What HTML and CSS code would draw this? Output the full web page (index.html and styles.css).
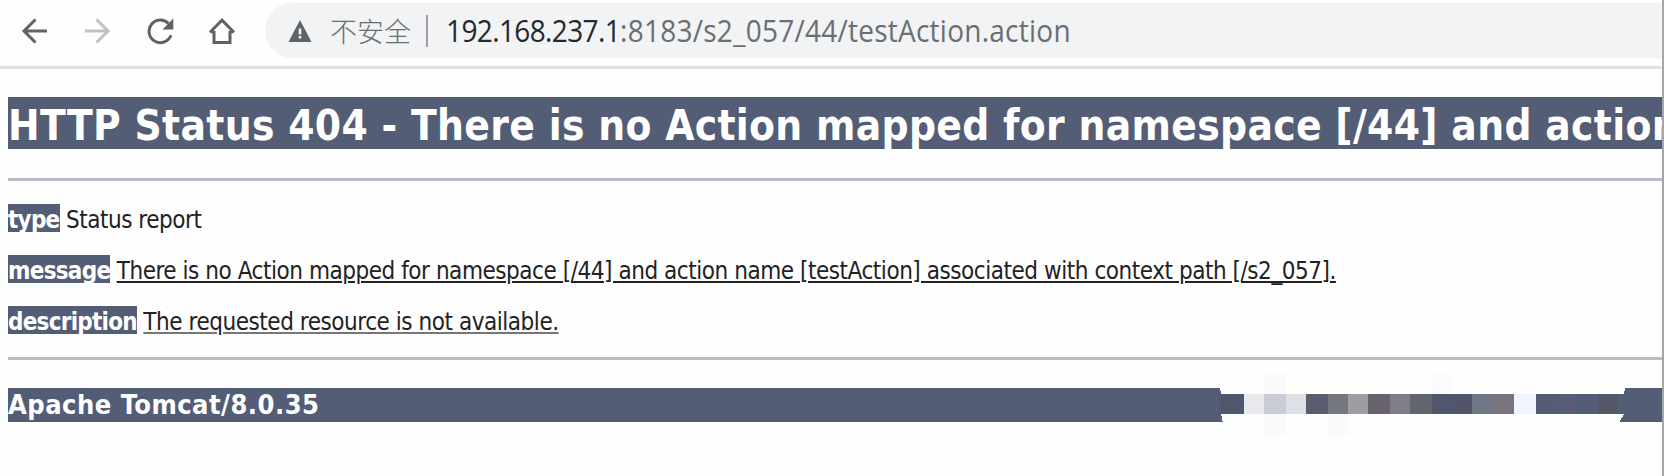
FILE: index.html
```html
<!DOCTYPE html>
<html lang="zh-CN">
<head>
<meta charset="utf-8">
<title>Apache Tomcat/8.0.35 - Error report</title>
<link rel="stylesheet" href="styles.css">
</head>
<body>
<div class="window">
  <header class="toolbar">
    <nav class="nav">
      <svg class="icon" viewBox="0 0 28 28"><path d="M26 14H3M14.500 2.500L3 14l11.500 11.500"/></svg>
      <svg class="icon disabled" viewBox="0 0 28 28"><path d="M2 14h23M13.500 2.500L25 14 13.500 25.500"/></svg>
      <svg class="icon" viewBox="0 0 28 28"><path d="M25 18.200A11.300 11.300 0 1 1 22.500 6.500"/><path class="solid" d="M27.300 1.500v11H16.500z"/></svg>
      <svg class="icon" viewBox="0 0 28 28"><path d="M2 15.200L14 3.200l12 12M2.300 14.800h4M21.700 14.800h4M6 14v11.500h16V14"/></svg>
    </nav>
    <div class="address">
      <svg class="warning" viewBox="0 0 24 22"><path d="M12 0l11.500 22H.500z"/><path class="mark" d="M10.700 8.500h2.600v6h-2.600zM10.700 16h2.600v2.600h-2.600z"/></svg>
      <span class="insecure">不安全</span>
      <span class="divider"></span>
      <span class="url"><span class="host">192.168.237.1</span><span class="path">:8183/s2_057/44/testAction.action</span></span>
    </div>
  </header>
  <main class="report">
    <h1>HTTP Status 404 - There is no Action mapped for namespace [/44] and action</h1>
    <hr>
    <p><b>type</b> <span>Status report</span></p>
    <p><b>message</b> <u>There is no Action mapped for namespace [/44] and action name [testAction] associated with context path [/s2_057].</u></p>
    <p><b>description</b> <u class="thin">The requested resource is not available.</u></p>
    <hr>
    <h3>Apache Tomcat/8.0.35</h3>
    <svg class="mosaic" viewBox="1218 372 410 66" shape-rendering="crispEdges">
      <path fill="#fefefe" d="M1220 378h405v10l-1 6v20l-5 9h-396l-2-9v-20l-1-6z"/>
      <path fill="#fafafc" d="M1264 374h22v20h-22zM1264 414h22v21h-22z"/>
      <path fill="#fefefa" d="M1286 375h82v19h-82zM1576 375h40v19h-40z"/>
      <path fill="#fdfaff" d="M1432 374h20v20h-20z"/>
      <path fill="#fafafb" d="M1328 414h20v21h-20z"/>
      <path fill="#fbfdff" d="M1224 414h20v18h-20zM1286 414h20v20h-20z"/>
      <path fill="#50566b" d="M1220 394h24v20h-24z"/>
      <path fill="#e8eaee" d="M1244 394h20v20h-20z"/>
      <path fill="#c9ccd7" d="M1264 394h22v20h-22z"/>
      <path fill="#dfe0e5" d="M1286 394h20v20h-20z"/>
      <path fill="#5a5d6f" d="M1306 394h22v20h-22z"/>
      <path fill="#747782" d="M1328 394h20v20h-20z"/>
      <path fill="#9c9ea1" d="M1348 394h20v20h-20z"/>
      <path fill="#68636e" d="M1368 394h22v20h-22z"/>
      <path fill="#7f7d87" d="M1390 394h20v20h-20z"/>
      <path fill="#62666d" d="M1410 394h22v20h-22z"/>
      <path fill="#50566d" d="M1432 394h20v20h-20z"/>
      <path fill="#505667" d="M1452 394h20v20h-20z"/>
      <path fill="#707787" d="M1472 394h22v20h-22z"/>
      <path fill="#79757f" d="M1494 394h20v20h-20z"/>
      <path fill="#f0f4fd" d="M1514 394h22v20h-22z"/>
      <path fill="#545d75" d="M1536 394h22v20h-22z"/>
      <path fill="#5a5b76" d="M1558 394h18v20h-18z"/>
      <path fill="#525d75" d="M1576 394h22v20h-22z"/>
      <path fill="#535866" d="M1598 394h20v20h-20z"/>
      <path fill="#525c73" d="M1618 394h8v20h-8z"/>
    </svg>
  </main>
</div>
</body>
</html>
```
FILE: styles.css
```css
* { box-sizing: border-box; }
body { margin: 0; background: #fefefe; }
.window {
  position: relative;
  height: 476px;
  overflow: hidden;
  border-right: 2px solid #a6a6a6;
}
.toolbar {
  display: flex;
  align-items: flex-start;
  height: 69px;
  padding-top: 3px;
  border-bottom: 3px solid #dfe1e5;
}
.nav {
  display: flex;
  gap: 34.500px;
  width: 265px;
  padding: 13.500px 0 0 20.500px;
  flex: none;
}
.icon { width: 28px; height: 28px; fill: none; stroke: #5f6368; stroke-width: 3; flex: none; }
.icon.disabled { stroke: #bfc1c4; }
.icon .solid { fill: #5f6368; stroke: none; }
.address {
  display: flex;
  align-items: center;
  flex: 1;
  height: 55px;
  padding-left: 23px;
  border-radius: 28px 0 0 28px;
  background: #f1f3f4;
  white-space: nowrap;
}
.warning { width: 24px; height: 22px; fill: #5f6368; }
.warning .mark { fill: #f1f3f4; }
.insecure {
  margin-left: 18px;
  font: 300 27px/40px "Noto Sans CJK SC", sans-serif;
  color: #6a6d71;
}
.divider { width: 2px; height: 32px; margin: 1px 18px 0 15px; background: #9b9ea2; }
.url {
  padding-bottom: 2px;
  font: 28px/40px "Open Sans", sans-serif;
  transform: scaleY(1.1);
  color: #6b6e72;
}
.host { color: #25282c; letter-spacing: -0.620px; }
.path { letter-spacing: 0.250px; }

.report {
  padding: 28px 0 0 8px;
  font-family: "DejaVu Sans Condensed", "DejaVu Sans", sans-serif;
  font-stretch: condensed;
  white-space: nowrap;
}
h1, h3, b { background: #545d76; color: #fff; font-weight: bold; }
h1 { margin: 0; height: 52px; font-size: 42px; line-height: 57px; letter-spacing: 0.320px; }
hr { height: 3px; margin: 29px 0 23px; border: 0; background: #b9bcc8; }
p { margin: 0 0 23px; height: 28px; font-size: 24px; line-height: 32px; color: #222; letter-spacing: -0.460px; }
b { display: inline-block; height: 28px; margin-right: 0; letter-spacing: -0.750px; vertical-align: top; }
u { text-decoration-thickness: 2px; text-underline-offset: 2px; }
u.thin { text-decoration-color: #777; }
h3 { margin: 28px 0 0; height: 34px; font-size: 27px; line-height: 34px; letter-spacing: 0.500px; }
p + hr { margin-bottom: 0; margin-top: 23px; }
.mosaic { position: absolute; left: 1218px; top: 372px; width: 410px; height: 66px; }
```
